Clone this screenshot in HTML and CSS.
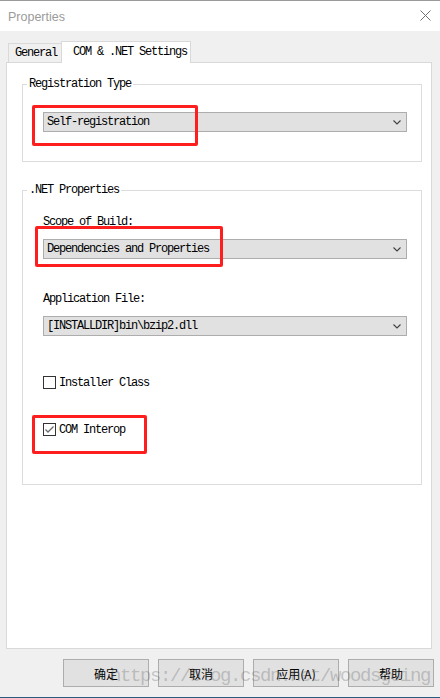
FILE: index.html
```html
<!DOCTYPE html>
<html>
<head>
<meta charset="utf-8">
<title>Properties</title>
<link rel="stylesheet" href="styles.css">
</head>
<body>
<div class="window">
  <div class="titlebar">
    <span class="title">Properties</span>
    <svg class="close" width="11" height="11" viewBox="0 0 11 11"><path d="M0.5 0.5L10.5 10.5M10.5 0.5L0.5 10.5" stroke="#707070" stroke-width="1" fill="none"/></svg>
  </div>
  <div class="client">
    <div class="tabs">
      <div class="tab">General</div>
      <div class="tab active">COM &amp; .NET Settings</div>
    </div>
    <div class="panel">
      <div class="group g1">
        <span class="legend">Registration Type</span>
        <div class="combo">
          <span>Self-registration</span>
          <svg class="chev" width="8" height="5" viewBox="0 0 8 5"><path d="M0.5 0.5L4 4L7.5 0.5" stroke="#404040" stroke-width="1.1" fill="none"/></svg>
        </div>
      </div>
      <div class="group g2">
        <span class="legend">.NET Properties</span>
        <div class="label l1">Scope of Build:</div>
        <div class="combo">
          <span>Dependencies and Properties</span>
          <svg class="chev" width="8" height="5" viewBox="0 0 8 5"><path d="M0.5 0.5L4 4L7.5 0.5" stroke="#404040" stroke-width="1.1" fill="none"/></svg>
        </div>
        <div class="label l2">Application File:</div>
        <div class="combo">
          <span>[INSTALLDIR]bin\bzip2.dll</span>
          <svg class="chev" width="8" height="5" viewBox="0 0 8 5"><path d="M0.5 0.5L4 4L7.5 0.5" stroke="#404040" stroke-width="1.1" fill="none"/></svg>
        </div>
        <div class="check c1"><span class="box"></span><span>Installer Class</span></div>
        <div class="check c2"><span class="box"><svg width="11" height="11" viewBox="0 0 11 11"><path d="M1.5 5.5L4 8L9.5 2.5" stroke="#6a6a6a" stroke-width="1.3" fill="none"/></svg></span><span>COM Interop</span></div>
      </div>
    </div>
    <div class="buttons">
      <div class="btn">确定</div>
      <div class="btn">取消</div>
      <div class="btn">应用(A)</div>
      <div class="btn">帮助</div>
    </div>
  </div>
  <div class="mark r1"></div>
  <div class="mark r2"></div>
  <div class="mark r3"></div>
  <div class="watermark">https://blog.csdn.net/woodsgoing</div>
</div>
</body>
</html>
```
FILE: styles.css
```css
html, body {
  margin: 0;
  padding: 0;
}
body {
  width: 440px;
  height: 698px;
  overflow: hidden;
  background: #f0f0f0;
}
.window {
  position: relative;
  width: 440px;
  height: 698px;
  box-sizing: border-box;
  border-top: 1px solid #9a9a9a;
  border-bottom: 1px solid #2b5b7e;
  background: #f0f0f0;
  display: flex;
  flex-direction: column;
}
.titlebar {
  height: 30px;
  background: #ffffff;
  display: flex;
  align-items: center;
  justify-content: space-between;
  padding: 0 9px 0 8px;
}
.title {
  font-family: "Liberation Sans", Arial, sans-serif;
  font-size: 12.5px;
  color: #9b9b9b;
  margin-top: 1px;
}
.close {
  display: block;
  margin-top: -1px;
}
.client {
  flex: 1;
  display: flex;
  flex-direction: column;
  padding: 10px 8px 0 6px;
  font-family: "Liberation Mono", "Courier New", monospace;
  font-size: 12px;
  letter-spacing: -1.2px;
  color: #000;
}
.tabs {
  height: 21px;
  display: flex;
  align-items: flex-end;
  padding-left: 2px;
}
.tab {
  box-sizing: border-box;
  height: 19px;
  border: 1px solid #d9d9d9;
  border-bottom: none;
  background: #f0f0f0;
  padding: 0 4px 0 6px;
  line-height: 19px;
}
.tab.active {
  height: 22px;
  margin-bottom: -1px;
  margin-left: -1px;
  background: #ffffff;
  padding: 0 3px 0 11px;
  line-height: 20px;
  position: relative;
  z-index: 1;
}
.panel {
  box-sizing: border-box;
  height: 587px;
  border: 1px solid #d9d9d9;
  background: #ffffff;
  padding: 0 9px 0 15px;
}
.group {
  position: relative;
  border: 1px solid #dcdcdc;
  padding: 0 14px 0 20px;
}
.g1 {
  margin-top: 21px;
  padding-top: 27px;
  padding-bottom: 29px;
}
.g2 {
  margin-top: 28px;
  padding-top: 25px;
  padding-bottom: 48px;
}
.legend {
  position: absolute;
  top: -7px;
  left: 4px;
  padding: 0 2px;
  background: #ffffff;
  line-height: 12px;
}
.combo {
  box-sizing: border-box;
  height: 20px;
  border: 1px solid #adadad;
  background: #e1e1e1;
  display: flex;
  align-items: center;
  justify-content: space-between;
  padding: 0 5px 0 3px;
  line-height: 12px;
}
.chev {
  display: block;
  margin-top: 1px;
}
.label {
  line-height: 12px;
  margin-bottom: 11px;
}
.l2 {
  margin-top: 34px;
}
.check {
  display: flex;
  align-items: center;
  height: 13px;
  line-height: 12px;
}
.c1 {
  margin-top: 40px;
}
.c2 {
  margin-top: 34px;
}
.box {
  box-sizing: border-box;
  width: 13px;
  height: 13px;
  border: 1px solid #333333;
  background: #ffffff;
  margin-right: 3px;
  display: flex;
  align-items: center;
  justify-content: center;
}
.box svg {
  display: block;
}
.buttons {
  display: flex;
  justify-content: flex-end;
  gap: 9px;
  margin-top: 10px;
  margin-right: -2px;
}
.btn {
  box-sizing: border-box;
  width: 86px;
  height: 28px;
  border: 1px solid #adadad;
  background: #e1e1e1;
  font-family: "Noto Sans CJK SC", sans-serif;
  font-size: 12px;
  letter-spacing: 0;
  display: flex;
  align-items: center;
  justify-content: center;
}
.mark {
  position: absolute;
  box-sizing: border-box;
  border: 3px solid #ff1e1e;
  border-radius: 2px;
}
.r1 {
  left: 32px;
  top: 104px;
  width: 166px;
  height: 41px;
}
.r2 {
  left: 35px;
  top: 225px;
  width: 188px;
  height: 41px;
}
.r3 {
  left: 32px;
  top: 414px;
  width: 115px;
  height: 39px;
}
.watermark {
  position: absolute;
  left: 110px;
  top: 665px;
  font-family: "Liberation Mono", "Courier New", monospace;
  font-size: 19px;
  letter-spacing: -1.4px;
  line-height: 20px;
  color: rgba(90, 90, 90, 0.3);
  pointer-events: none;
}
```
